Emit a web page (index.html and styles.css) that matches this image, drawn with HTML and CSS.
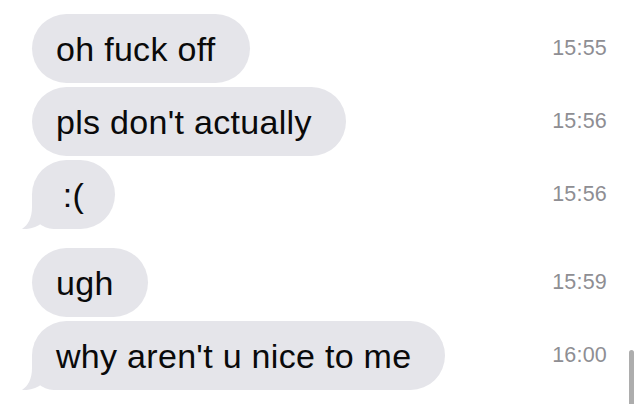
FILE: index.html
```html
<!DOCTYPE html>
<html>
<head>
<meta charset="utf-8">
<link rel="stylesheet" href="styles.css">
</head>
<body>
<div class="thread">
  <div class="row">
    <div class="bubble">oh fuck off</div>
    <span class="time">15:55</span>
  </div>
  <div class="row">
    <div class="bubble">pls don't actually</div>
    <span class="time">15:56</span>
  </div>
  <div class="row">
    <div class="bubble short tailed">:(
      <svg class="tail" width="34" height="36" viewBox="0 0 34 36"><path d="M10,0 L10,14 C10,25 6,32 0,36 C8,36.6 15,34 20,30 L20,14 Z"/></svg>
    </div>
    <span class="time">15:56</span>
  </div>
  <div class="row after-tail">
    <div class="bubble">ugh</div>
    <span class="time">15:59</span>
  </div>
  <div class="row">
    <div class="bubble tailed">why aren't u nice to me
      <svg class="tail" width="34" height="36" viewBox="0 0 34 36"><path d="M10,0 L10,14 C10,25 6,32 0,36 C8,36.6 15,34 20,30 L20,14 Z"/></svg>
    </div>
    <span class="time">16:00</span>
  </div>
</div>
<div class="scroll-indicator"></div>
</body>
</html>
```

FILE: styles.css
```css
html, body {
  margin: 0;
  padding: 0;
  background: #ffffff;
  width: 640px;
  height: 404px;
  overflow: hidden;
}

body {
  position: relative;
  font-family: "Liberation Sans", Arial, Helvetica, sans-serif;
}

.thread {
  display: flex;
  flex-direction: column;
  padding: 14px 33px 0 32px;
}

.row {
  display: flex;
  align-items: center;
  margin-top: 4px;
}

.row:first-child {
  margin-top: 0;
}

.row.after-tail {
  margin-top: 19px;
}

.bubble {
  position: relative;
  background: #e5e5ea;
  color: #0a0a0a;
  font-size: 34px;
  letter-spacing: 0.3px;
  line-height: 41px;
  padding: 15px 34px 13px 24px;
  border-radius: 35px;
  white-space: nowrap;
}

.bubble.short {
  width: 83px;
  box-sizing: border-box;
  padding-left: 0;
  padding-right: 0;
  text-align: center;
}

.bubble.tailed {
  border-bottom-left-radius: 22px;
}

.tail {
  position: absolute;
  left: -10px;
  bottom: 0;
  fill: #e5e5ea;
}

.time {
  margin-left: auto;
  color: #8e8e93;
  font-size: 21.5px;
  letter-spacing: 0.2px;
}

.scroll-indicator {
  position: absolute;
  left: 629px;
  top: 350px;
  width: 5px;
  height: 70px;
  border-radius: 2.5px;
  background: #adadad;
}
```
